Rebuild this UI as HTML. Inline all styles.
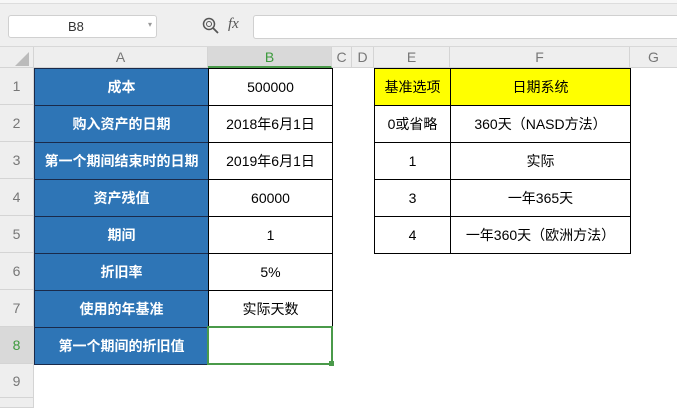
<!DOCTYPE html>
<html><head><meta charset="utf-8"><style>
*{margin:0;padding:0;box-sizing:border-box}
body{width:677px;height:403px;overflow:hidden;background:#fff;font-family:"Liberation Sans","Noto Sans CJK SC",sans-serif;position:relative}
.a{position:absolute}
.c{position:absolute;display:flex;align-items:center;justify-content:center;font-size:14px;color:#000}
.h{position:absolute;display:flex;align-items:center;justify-content:center;font-size:14px;color:#777;background:#eeeeee;border-right:1px solid #d4d4d4;border-bottom:1px solid #d4d4d4}
.bl{background:#2e75b6;color:#fff;font-weight:bold;border:1px solid #1a2a4a}
.wb{border:1px solid #000;background:#fff}
.ye{background:#ffff00;border:1px solid #000}
</style></head><body>
<div class="a" style="left:0;top:0;width:677px;height:47px;background:#efefef;border-bottom:1px solid #d8d8d8"></div>
<div class="a" style="left:0;top:0;width:677px;height:4px;background:#f7f7f7;border-bottom:1px solid #ddd"></div>
<div class="a" style="left:8px;top:15px;width:149px;height:23px;background:#fff;border:1px solid #d0d0d0;border-radius:3px"></div>
<div class="a" style="left:68px;top:19px;font-size:13px;color:#333">B8</div>
<div class="a" style="left:148px;top:20px;font-size:8px;color:#999">▾</div>
<svg class="a" style="left:202px;top:17px" width="18" height="18"><circle cx="7" cy="7" r="5.5" fill="none" stroke="#555" stroke-width="1.5"/><circle cx="7" cy="7" r="2.5" fill="none" stroke="#555"/><line x1="11" y1="11" x2="16" y2="16" stroke="#555" stroke-width="1.8"/></svg>
<div class="a" style="left:228px;top:16px;font-size:15px;font-style:italic;color:#555;font-family:'Liberation Serif',serif">fx</div>
<div class="a" style="left:253px;top:15px;width:430px;height:24px;background:#fff;border:1px solid #d0d0d0;border-radius:3px"></div>
<!-- column headers -->
<div class="h" style="left:0;top:47px;width:34px;height:21px"><svg width="14" height="14" style="margin-left:10px;margin-top:4px"><polygon points="14,0 14,14 0,14" fill="#bbb"/></svg></div>
<div class="h" style="left:34px;top:47px;width:174px;height:21px">A</div>
<div class="h" style="left:208px;top:47px;width:124px;height:21px;background:#d9d9d9;color:#3c9a3c;border-bottom:2px solid #4a9a4a">B</div>
<div class="h" style="left:332px;top:47px;width:20px;height:21px">C</div>
<div class="h" style="left:352px;top:47px;width:22px;height:21px">D</div>
<div class="h" style="left:374px;top:47px;width:76px;height:21px">E</div>
<div class="h" style="left:450px;top:47px;width:180px;height:21px">F</div>
<div class="h" style="left:630px;top:47px;width:47px;height:21px;border-right:none">G</div>
<!-- row headers -->
<div class="h" style="left:0;top:68px;width:34px;height:37px">1</div>
<div class="h" style="left:0;top:105px;width:34px;height:37px">2</div>
<div class="h" style="left:0;top:142px;width:34px;height:37px">3</div>
<div class="h" style="left:0;top:179px;width:34px;height:37px">4</div>
<div class="h" style="left:0;top:216px;width:34px;height:37px">5</div>
<div class="h" style="left:0;top:253px;width:34px;height:37px">6</div>
<div class="h" style="left:0;top:290px;width:34px;height:37px">7</div>
<div class="h" style="left:0;top:327px;width:34px;height:37px;background:#d9d9d9;color:#3c9a3c">8</div>
<div class="h" style="left:0;top:364px;width:34px;height:34px">9</div>
<div class="h" style="left:0;top:398px;width:34px;height:10px"></div>
<!-- A column -->
<div class="c bl" style="left:34px;top:68px;width:175px;height:38px">成本</div>
<div class="c bl" style="left:34px;top:105px;width:175px;height:38px">购入资产的日期</div>
<div class="c bl" style="left:34px;top:142px;width:175px;height:38px">第一个期间结束时的日期</div>
<div class="c bl" style="left:34px;top:179px;width:175px;height:38px">资产残值</div>
<div class="c bl" style="left:34px;top:216px;width:175px;height:38px">期间</div>
<div class="c bl" style="left:34px;top:253px;width:175px;height:38px">折旧率</div>
<div class="c bl" style="left:34px;top:290px;width:175px;height:38px">使用的年基准</div>
<div class="c bl" style="left:34px;top:327px;width:175px;height:38px">第一个期间的折旧值</div>
<!-- B column -->
<div class="c wb" style="left:208px;top:68px;width:125px;height:38px">500000</div>
<div class="c wb" style="left:208px;top:105px;width:125px;height:38px">2018年6月1日</div>
<div class="c wb" style="left:208px;top:142px;width:125px;height:38px">2019年6月1日</div>
<div class="c wb" style="left:208px;top:179px;width:125px;height:38px">60000</div>
<div class="c wb" style="left:208px;top:216px;width:125px;height:38px">1</div>
<div class="c wb" style="left:208px;top:253px;width:125px;height:38px">5%</div>
<div class="c wb" style="left:208px;top:290px;width:125px;height:38px">实际天数</div>
<div class="a" style="left:207px;top:326px;width:126px;height:39px;border:2px solid #4a9a4a;background:#fff"></div>
<div class="a" style="left:329px;top:361px;width:5px;height:5px;background:#4a9a4a"></div>
<!-- E/F table -->
<div class="c ye" style="left:374px;top:68px;width:77px;height:38px">基准选项</div>
<div class="c ye" style="left:450px;top:68px;width:181px;height:38px">日期系统</div>
<div class="c wb" style="left:374px;top:105px;width:77px;height:38px">0或省略</div>
<div class="c wb" style="left:450px;top:105px;width:181px;height:38px">360天（NASD方法）</div>
<div class="c wb" style="left:374px;top:142px;width:77px;height:38px">1</div>
<div class="c wb" style="left:450px;top:142px;width:181px;height:38px">实际</div>
<div class="c wb" style="left:374px;top:179px;width:77px;height:38px">3</div>
<div class="c wb" style="left:450px;top:179px;width:181px;height:38px">一年365天</div>
<div class="c wb" style="left:374px;top:216px;width:77px;height:38px">4</div>
<div class="c wb" style="left:450px;top:216px;width:181px;height:38px">一年360天（欧洲方法）</div>
</body></html>
